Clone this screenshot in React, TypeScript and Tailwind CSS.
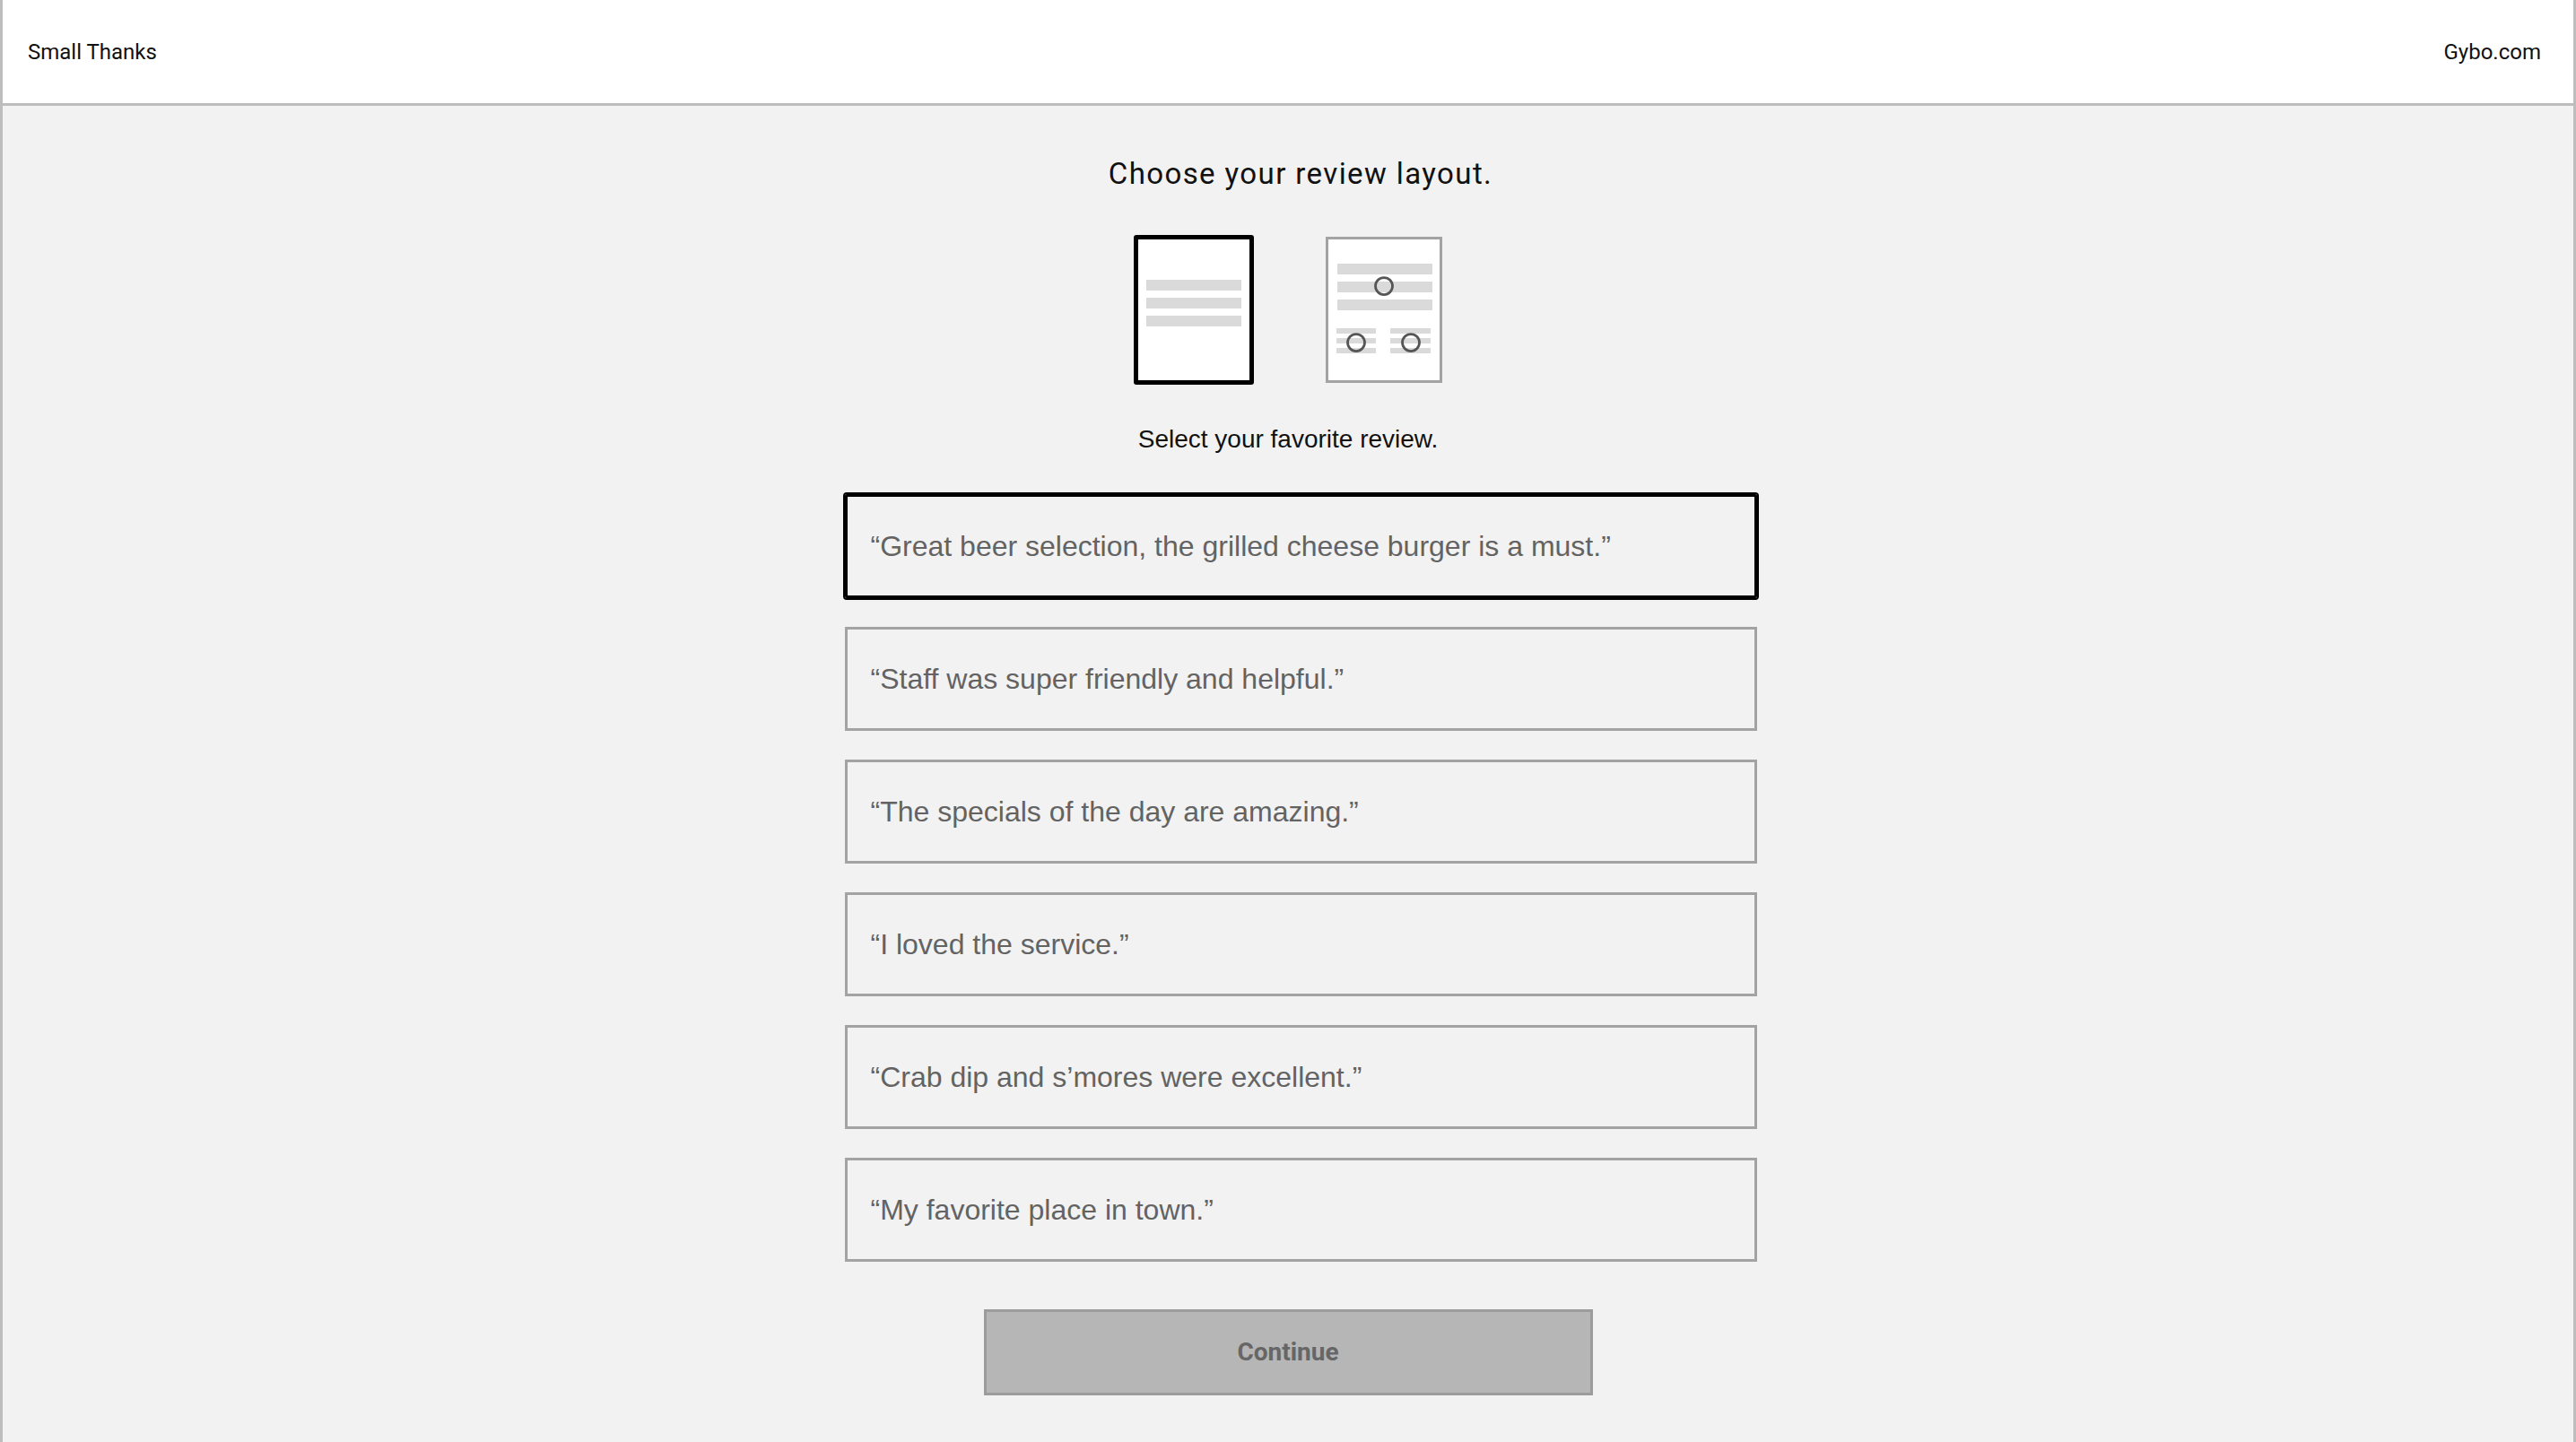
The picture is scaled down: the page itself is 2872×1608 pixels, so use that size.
import React from "react";

const reviews = [
  "“Great beer selection, the grilled cheese burger is a must.”",
  "“Staff was super friendly and helpful.”",
  "“The specials of the day are amazing.”",
  "“I loved the service.”",
  "“Crab dip and s’mores were excellent.”",
  "“My favorite place in town.”",
];

function LayoutTwo() {
  return (
    <div className="w-[130px] h-[163px] border-[3px] border-[#a3a3a3] bg-white">
      <svg width="124" height="157" viewBox="0 0 124 157" className="block">
        <rect x="10" y="27" width="106" height="12" fill="#dadada" />
        <rect x="10" y="47" width="106" height="12" fill="#dadada" />
        <rect x="10" y="67" width="106" height="12" fill="#dadada" />
        <circle cx="62" cy="52" r="9.5" fill="none" stroke="#555" strokeWidth="2.75" />
        <rect x="9" y="99" width="44" height="6" fill="#dadada" />
        <rect x="9" y="110" width="44" height="6" fill="#dadada" />
        <rect x="9" y="121" width="44" height="6" fill="#dadada" />
        <rect x="69" y="99" width="45" height="6" fill="#dadada" />
        <rect x="69" y="110" width="45" height="6" fill="#dadada" />
        <rect x="69" y="121" width="45" height="6" fill="#dadada" />
        <circle cx="31" cy="115" r="9.5" fill="none" stroke="#555" strokeWidth="2.75" />
        <circle cx="92" cy="115" r="9.5" fill="none" stroke="#555" strokeWidth="2.75" />
      </svg>
    </div>
  );
}

export default function App() {
  return (
    <div className="min-h-screen flex flex-col border-x-[3px] border-[#bdbdbd] font-['Roboto',sans-serif]">
      <header className="h-[118px] shrink-0 bg-white border-b-[3px] border-[#bdbdbd] flex items-center justify-between pl-[28px] pr-[36px] text-[24px] text-[#111]">
        <span>Small Thanks</span>
        <span>Gybo.com</span>
      </header>
      <main className="flex-1 bg-[#f2f2f2] flex flex-col items-center pb-[40px]">
        <h1 className="mt-[56px] ml-[28px] text-[33px] leading-[40px] tracking-[1.4px] text-[#111] font-normal">
          Choose your review layout.
        </h1>
        <div className="mt-[48px] flex items-center gap-[80px]">
          <div className="w-[134px] h-[167px] border-[5px] border-black rounded-[3px] bg-white flex flex-col gap-[8px] px-[9px] pt-[45px]">
            <div className="h-[12px] bg-[#dadada]" />
            <div className="h-[12px] bg-[#dadada]" />
            <div className="h-[12px] bg-[#dadada]" />
          </div>
          <LayoutTwo />
        </div>
        <p className="mt-[45px] text-[28px] leading-[32px] text-[#111] font-['Liberation_Sans',Arial,sans-serif]">
          Select your favorite review.
        </p>
        <div className="mt-[45px] ml-[28px] w-[1017px] flex flex-col gap-[32px] font-['Liberation_Sans',Arial,sans-serif]">
          {reviews.map((r, i) => (
            <div
              key={i}
              className={
                i === 0
                  ? "h-[116px] border-[3px] border-black ring-2 ring-black rounded-[2px] flex items-center pl-[26px] text-[32px] text-[#636363]"
                  : "h-[116px] border-[3px] border-[#a3a3a3] flex items-center pl-[26px] text-[32px] text-[#636363]"
              }
            >
              {r}
            </div>
          ))}
        </div>
        <button className="mt-[53px] w-[679px] h-[96px] bg-[#b6b6b6] border-[3px] border-[#9c9c9c] text-[28px] font-bold text-[#666]">
          Continue
        </button>
      </main>
    </div>
  );
}
